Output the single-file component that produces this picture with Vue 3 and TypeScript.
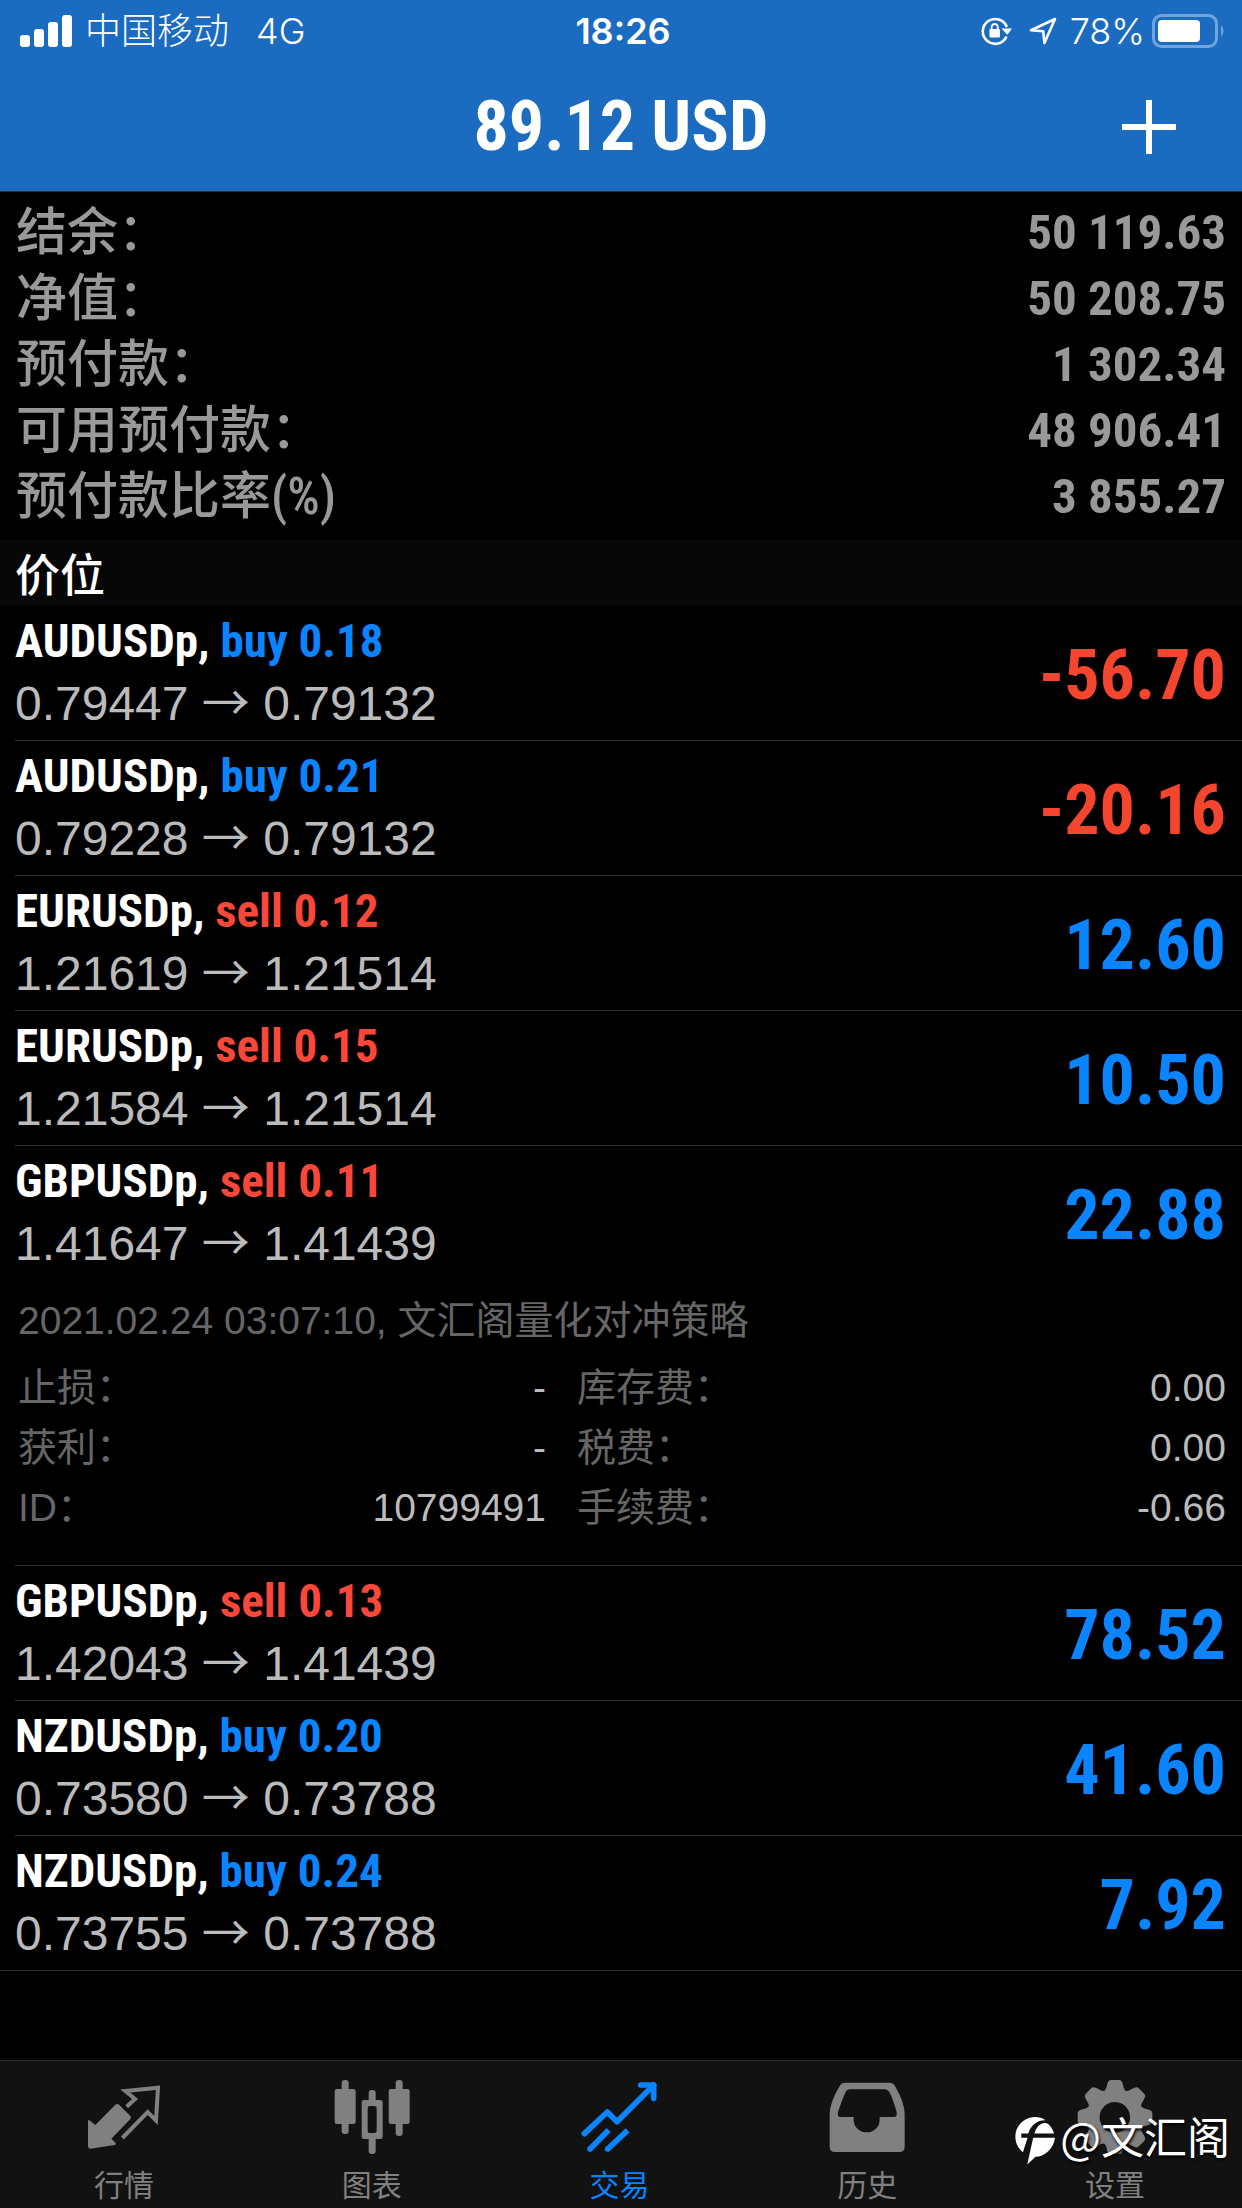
<script setup lang="ts">
import { ref } from 'vue'

interface Detail {
  label: string
  value: string
}

interface Position {
  symbol: string
  side: 'buy' | 'sell'
  volume: string
  open: string
  current: string
  profit: string
  comment?: string
  details?: Detail[]
}

type TabId = 'quotes' | 'charts' | 'trade' | 'history' | 'settings'

const summary: Detail[] = [
  { label: '结余：', value: '50 119.63' },
  { label: '净值：', value: '50 208.75' },
  { label: '预付款：', value: '1 302.34' },
  { label: '可用预付款：', value: '48 906.41' },
  { label: '预付款比率(%)', value: '3 855.27' },
]

const positions: Position[] = [
  { symbol: 'AUDUSDp', side: 'buy', volume: '0.18', open: '0.79447', current: '0.79132', profit: '-56.70' },
  { symbol: 'AUDUSDp', side: 'buy', volume: '0.21', open: '0.79228', current: '0.79132', profit: '-20.16' },
  { symbol: 'EURUSDp', side: 'sell', volume: '0.12', open: '1.21619', current: '1.21514', profit: '12.60' },
  { symbol: 'EURUSDp', side: 'sell', volume: '0.15', open: '1.21584', current: '1.21514', profit: '10.50' },
  {
    symbol: 'GBPUSDp',
    side: 'sell',
    volume: '0.11',
    open: '1.41647',
    current: '1.41439',
    profit: '22.88',
    comment: '2021.02.24 03:07:10, 文汇阁量化对冲策略',
    details: [
      { label: '止损：', value: '-' },
      { label: '库存费：', value: '0.00' },
      { label: '获利：', value: '-' },
      { label: '税费：', value: '0.00' },
      { label: 'ID：', value: '10799491' },
      { label: '手续费：', value: '-0.66' },
    ],
  },
  { symbol: 'GBPUSDp', side: 'sell', volume: '0.13', open: '1.42043', current: '1.41439', profit: '78.52' },
  { symbol: 'NZDUSDp', side: 'buy', volume: '0.20', open: '0.73580', current: '0.73788', profit: '41.60' },
  { symbol: 'NZDUSDp', side: 'buy', volume: '0.24', open: '0.73755', current: '0.73788', profit: '7.92' },
]

const tabs: { id: TabId; label: string; viewBox: string }[] = [
  { id: 'quotes', label: '行情', viewBox: '255 114 228 228' },
  { id: 'charts', label: '图表', viewBox: '1003 114 228 228' },
  { id: 'trade', label: '交易', viewBox: '244 114 228 228' },
  { id: 'history', label: '历史', viewBox: '988 114 228 228' },
  { id: 'settings', label: '设置', viewBox: '409 114 228 228' },
]

const activeTab = ref<TabId>('trade')
const teeth = [0, 45, 90, 135, 180, 225, 270, 315]
</script>

<template>
  <div class="app">
    <header class="top">
      <div class="status">
        <div class="status-left">
          <svg class="signal" viewBox="0 0 52 32" aria-hidden="true">
            <rect x="0" y="20" width="10" height="12" rx="3" />
            <rect x="14" y="14" width="10" height="18" rx="3" />
            <rect x="28" y="7" width="10" height="25" rx="3" />
            <rect x="42" y="0" width="10" height="32" rx="3" />
          </svg>
          <span class="carrier">中国移动</span>
          <span class="network">4G</span>
        </div>
        <time class="clock">18:26</time>
        <div class="status-right">
          <svg class="lock" viewBox="0 0 32 30" aria-hidden="true">
            <path d="M26.5 20.5A12.4 12.4 0 1 1 26.8 11" fill="none" stroke="#fff" stroke-width="2.6" />
            <path d="M21.5 12.5h10.5l-4.6 6.3z" fill="#fff" />
            <rect x="9.5" y="13" width="10.5" height="8.5" rx="1.2" fill="#fff" />
            <path d="M11.6 13.5v-2.4a3.1 3.1 0 0 1 6.2 0v2.4" fill="none" stroke="#fff" stroke-width="1.8" />
          </svg>
          <svg class="locate" viewBox="0 0 28 28" aria-hidden="true">
            <path d="M26 2 L2 13.2 L14.2 14.2 L15.4 26 Z" fill="none" stroke="#fff" stroke-width="2.6" stroke-linejoin="round" />
          </svg>
          <span class="percent">78%</span>
          <svg class="battery" viewBox="0 0 74 34" aria-hidden="true">
            <rect x="1.5" y="1.5" width="63" height="31" rx="8" fill="none" stroke="#6fa5dc" stroke-width="3" />
            <rect x="6" y="6" width="42" height="22" rx="4" fill="#fff" />
            <path d="M69 11q5 6 0 12z" fill="#6fa5dc" />
          </svg>
        </div>
      </div>
      <div class="title-bar">
        <h1>89.12 USD</h1>
        <button class="add" type="button" aria-label="新订单">
          <svg viewBox="0 0 54 54" aria-hidden="true">
            <path d="M27 0V54M0 27H54" stroke="#fff" stroke-width="6" />
          </svg>
        </button>
      </div>
    </header>

    <main>
      <dl class="summary">
        <div v-for="item in summary" :key="item.label" class="summary-row">
          <dt>{{ item.label }}</dt>
          <dd>{{ item.value }}</dd>
        </div>
      </dl>

      <h2 class="section">价位</h2>

      <ul class="positions">
        <li v-for="(p, i) in positions" :key="i" class="position">
          <div class="row">
            <div>
              <div class="name">
                {{ p.symbol }}, <span :class="p.side">{{ p.side }} {{ p.volume }}</span>
              </div>
              <div class="price">
                {{ p.open }} <span class="arrow">→</span> {{ p.current }}
              </div>
            </div>
            <div class="profit" :class="{ loss: p.profit.startsWith('-') }">{{ p.profit }}</div>
          </div>
          <div v-if="p.details" class="more">
            <p>{{ p.comment }}</p>
            <dl class="details">
              <div v-for="d in p.details" :key="d.label" class="detail">
                <dt>{{ d.label }}</dt>
                <dd>{{ d.value }}</dd>
              </div>
            </dl>
          </div>
        </li>
      </ul>
    </main>

    <nav class="tabs">
      <button
        v-for="tab in tabs"
        :key="tab.id"
        type="button"
        class="tab"
        :class="{ active: tab.id === activeTab }"
        @click="activeTab = tab.id"
      >
        <svg class="tab-icon" :viewBox="tab.viewBox" aria-hidden="true">
          <g v-if="tab.id === 'quotes'">
            <path
              d="M261 243q2-5 6-1l16 13 60-61q6-4 11 0l34 34q4 5 0 9l-57 59 13 13q2 5-3 6l-72 11q-8 1-8-7z"
              fill="currentColor"
            />
            <path
              d="M377 200l25-23-29-24 98-10-6 98-25-25-76 78"
              fill="none"
              stroke="currentColor"
              stroke-width="12"
            />
          </g>
          <g v-else-if="tab.id === 'charts'" fill="currentColor">
            <rect x="1026" y="120" width="21" height="162" rx="9" />
            <rect x="1005" y="147" width="63" height="105" rx="7" />
            <rect x="1188" y="120" width="21" height="168" rx="9" />
            <rect x="1167" y="147" width="63" height="105" rx="7" />
            <rect x="1107" y="150" width="21" height="42" rx="9" />
            <rect x="1107" y="285" width="21" height="57" rx="9" />
            <path
              fill-rule="evenodd"
              d="M1093 180h49q7 0 7 7v103q0 7-7 7h-49q-7 0-7-7v-103q0-7 7-7zM1111 198q-7 0-7 7v67q0 7 7 7h13q7 0 7-7v-67q0-7-7-7z"
            />
          </g>
          <g v-else-if="tab.id === 'trade'" fill="none" stroke="currentColor" stroke-width="17">
            <path d="M254 281L323 216L352 245L462 135" stroke-linejoin="round" stroke-linecap="round" />
            <path d="M423 135h39v40" stroke-linecap="round" stroke-linejoin="round" />
            <path d="M327 270L271 327M384 271L324 327" />
            <circle cx="271" cy="327" r="4" stroke-width="9" />
            <circle cx="324" cy="327" r="4" stroke-width="9" />
          </g>
          <path
            v-else-if="tab.id === 'history'"
            fill="currentColor"
            fill-rule="evenodd"
            d="M1037 128h132q12 0 17 10 29 50 29 84v98q0 16-16 16h-193q-16 0-16-16v-98q0-34 30-84 5-10 17-10zM1052 148q-11 0-14 8-9 18-23 60-3 15 7 15h40v9a39 37 0 0 0 78 0v-9h43q10 0 8-15-12-42-22-60-4-8-14-8z"
          />
          <g v-else fill="currentColor">
            <path
              v-for="a in teeth"
              :key="a"
              :transform="`rotate(${a} 523 232)`"
              d="M484 158q12-5 15-23 3-15 12-15h24q9 0 12 15 3 18 15 23z"
            />
            <path fill-rule="evenodd" d="M523 148a84 84 0 1 0 1 0zM523 186a46 46 0 1 1-1 0z" />
          </g>
        </svg>
        <span>{{ tab.label }}</span>
      </button>

      <div class="watermark">
        <svg viewBox="213 237 121 144" aria-hidden="true">
          <path
            fill="#fff"
            d="M237 343C207 320 206 273 237 249C260 232 288 234 305 246C282 245 262 259 253 286H232V299H251Z"
          />
          <path
            fill="#fff"
            d="M272 286C278 264 293 251 308 255C318 258 327 272 331 286ZM268 299H334C330 334 301 356 275 357L250 380Z"
          />
        </svg>
        <span>@文汇阁</span>
      </div>
    </nav>
  </div>
</template>

<style>
body {
  background: #000;
}
</style>

<style scoped>
.app {
  display: flex;
  flex-direction: column;
  min-height: 100vh;
  color: #fff;
  font-family: 'Liberation Sans', 'Noto Sans CJK SC', sans-serif;
}

h1,
h2,
p,
dl,
dd,
ul {
  margin: 0;
  padding: 0;
}

button {
  padding: 0;
  border: 0;
  background: none;
  color: inherit;
  font: inherit;
}

svg {
  display: block;
}

.top {
  background: #1b6cc0;
  border-bottom: 1px solid #223547;
}

.status {
  display: grid;
  grid-template-columns: 1fr auto 1fr;
  align-items: center;
  height: 62px;
  padding: 0 16px 0 20px;
  font-family: Inter, 'Noto Sans CJK SC', sans-serif;
  font-size: 36px;
  line-height: 62px;
}

.status-left,
.status-right {
  display: flex;
  align-items: center;
}

.status-right {
  justify-content: flex-end;
}

.signal {
  width: 52px;
  height: 32px;
  margin-right: 13px;
  fill: #fff;
}

.carrier {
  font-weight: 300;
}

.network {
  margin-left: 27px;
  font-weight: 300;
}

.clock {
  font-weight: 600;
}

.lock {
  width: 32px;
  height: 30px;
  margin-right: 17px;
}

.locate {
  width: 28px;
  height: 28px;
  margin-right: 13px;
}

.percent {
  font-weight: 300;
}

.battery {
  width: 74px;
  height: 34px;
  margin-left: 7px;
}

.title-bar {
  display: grid;
  grid-template-columns: 1fr auto 1fr;
  align-items: center;
  height: 129px;
}

h1 {
  grid-column: 2;
  font-family: 'Roboto Condensed', 'Liberation Sans', sans-serif;
  font-size: 70px;
  line-height: 129px;
  font-weight: 700;
}

.add {
  justify-self: end;
  margin-right: 66px;
}

.add svg {
  width: 54px;
  height: 54px;
}

main {
  flex: 1;
}

.summary {
  padding: 8px 16px 10px;
  color: #999;
  font-family: 'Roboto Condensed', 'Noto Sans CJK SC', sans-serif;
}

.summary-row {
  display: flex;
  justify-content: space-between;
  line-height: 66px;
}

.summary dt {
  font-size: 51px;
  font-weight: 500;
}

.summary dd {
  font-size: 49px;
  font-weight: 700;
}

.section {
  padding: 8px 15px 0;
  background: #070707;
  font-size: 45px;
  line-height: 58px;
  font-weight: 500;
}

.positions {
  list-style: none;
}

.position {
  margin-left: 15px;
  border-bottom: 1px solid #333;
}

.position:last-child {
  margin-left: 0;
  padding-left: 15px;
}

.row {
  display: flex;
  align-items: center;
  justify-content: space-between;
  padding: 3px 16px 5px 0;
}

.name,
.profit {
  font-family: 'Roboto Condensed', 'Liberation Sans', sans-serif;
  font-weight: 700;
}

.name {
  font-size: 47px;
  line-height: 63px;
}

.buy {
  color: #0a84ff;
}

.sell {
  color: #f9483a;
}

.price {
  color: #bbb;
  font-size: 48px;
  line-height: 63px;
}

.arrow {
  font-family: 'Noto Sans CJK SC', sans-serif;
  line-height: 1;
}

.profit {
  padding-top: 6px;
  color: #0a84ff;
  font-size: 70px;
  line-height: 76px;
}

.profit.loss {
  color: #f4452f;
}

.more {
  padding: 11px 16px 27px 3px;
  color: #666;
  font-size: 39px;
  line-height: 60px;
}

.details {
  display: grid;
  grid-template-columns: 528fr 649fr;
  column-gap: 31px;
  margin-top: 7px;
}

.detail {
  display: flex;
  justify-content: space-between;
}

.detail dd {
  color: #bbb;
}

.tabs {
  position: relative;
  display: grid;
  grid-template-columns: repeat(5, 1fr);
  height: 147px;
  padding-right: 3px;
  border-top: 1px solid #2b2b2b;
  background: #121212;
}

.tab {
  display: flex;
  flex-direction: column;
  align-items: center;
  padding-top: 17px;
  color: #808080;
  font-size: 30px;
  line-height: 40px;
}

.tab.active {
  color: #0a84ff;
}

.tab-icon {
  width: 76px;
  height: 76px;
  margin-bottom: 12px;
}

.watermark {
  position: absolute;
  right: 12px;
  bottom: 43px;
  display: flex;
  align-items: flex-end;
  gap: 5px;
  font-family: 'Noto Sans CJK SC', sans-serif;
  font-size: 43px;
  line-height: 60px;
  text-shadow: 1px 2px 3px #000;
}

.watermark svg {
  width: 40px;
  height: 48px;
}
</style>
